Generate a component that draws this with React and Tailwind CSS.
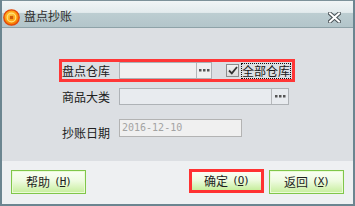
import React from "react";

const cjk = "font-['Noto_Sans_CJK_SC','Noto_Sans',sans-serif]";

function Dots() {
  return (
    <svg width="11" height="3" viewBox="0 0 11 3">
      <rect x="0" y="0" width="2.5" height="2.5" fill="#555" />
      <rect x="4" y="0" width="2.5" height="2.5" fill="#555" />
      <rect x="8" y="0" width="2.5" height="2.5" fill="#555" />
    </svg>
  );
}

function Coin() {
  return (
    <svg width="17" height="17" viewBox="0 0 17 17">
      <defs>
        <radialGradient id="cg" cx="0.45" cy="0.4" r="0.6">
          <stop offset="0" stopColor="#ffd24a" />
          <stop offset="0.6" stopColor="#ffa012" />
          <stop offset="1" stopColor="#f06a00" />
        </radialGradient>
      </defs>
      <circle cx="8.5" cy="8.5" r="7.7" fill="url(#cg)" stroke="#e2480a" strokeWidth="1.3" />
      <circle cx="8.5" cy="8.5" r="4.3" fill="none" stroke="#ffe27a" strokeWidth="1.2" />
      <rect x="6.8" y="6.8" width="3.4" height="3.4" fill="#d05a08" />
    </svg>
  );
}

function CloseX() {
  return (
    <svg width="13" height="11" viewBox="0 0 13 11">
      <path d="M2 1.5 L11 9.5 M11 1.5 L2 9.5" stroke="#4a5358" strokeWidth="4" strokeLinecap="square" />
      <path d="M2 1.5 L11 9.5 M11 1.5 L2 9.5" stroke="#ffffff" strokeWidth="2" strokeLinecap="square" />
    </svg>
  );
}

function GreenButton({ label, keyChar, className = "" }) {
  return (
    <div
      className={`w-[75px] h-[24px] flex items-center justify-center border border-[#80c64a] bg-[linear-gradient(to_bottom,#fafef4_0%,#eefbe0_45%,#c6ee9c_100%)] shadow-[inset_0_0_0_1px_#eafbd6] text-[12px] text-[#1e1e1e] ${cjk} ${className}`}
    >
      <span className="leading-[16px]">{label}</span>
      <span className="ml-[4px] leading-[16px] font-['DejaVu_Sans_Mono',monospace] text-[11px] tracking-[-1px]">
        (<span className="underline underline-offset-[1px]">{keyChar}</span>)
      </span>
    </div>
  );
}

export default function App() {
  return (
    <div className="w-[355px] h-[206px] flex flex-col border-x-2 border-b-2 border-[#6b8590] bg-[#dcdfe3] overflow-hidden">
      {/* Title bar */}
      <div className="h-[28px] shrink-0 flex items-center border-t border-[#7d929a] border-b border-b-[#8ea2a8] bg-[linear-gradient(to_bottom,#f1f5f6_0%,#e3ebed_44%,#bccdd1_47%,#b3c5ca_100%)]">
        <div className="ml-[1px] mt-[7px]">
          <Coin />
        </div>
        <div className={`ml-[4px] mt-[3px] text-[12px] leading-[16px] text-[#2e2e2e] ${cjk}`}>盘点抄账</div>
        <div className="ml-auto mr-[12px] mt-[6px]">
          <CloseX />
        </div>
      </div>

      {/* Content */}
      <div className={`h-[133px] shrink-0 pl-[57px] pt-[31px] ${cjk} text-[12px] text-[#202020]`}>
        {/* Row 1 with red highlight */}
        <div className="w-[236px] h-[23px] border-[3px] border-[#ff3636] flex items-center">
          <div className="w-[57px] leading-[16px] whitespace-nowrap">盘点仓库</div>
          <div className="w-[93px] h-[17px] flex border border-[#adb1b5] bg-[#f0f0f0]">
            <div className="flex-1" />
            <div className="w-[15px] border-l border-[#b4b6b8] flex items-center justify-center">
              <Dots />
            </div>
          </div>
          <div className="ml-[14px] w-[13px] h-[13px] shrink-0 border border-[#8c8c8c] bg-[linear-gradient(to_bottom,#f2f2f2,#dcdcdc)] flex items-center justify-center">
            <svg width="10" height="9" viewBox="0 0 10 9">
              <path d="M1 4.5 L3.8 7.3 L9 1" stroke="#333" strokeWidth="1.8" fill="none" />
            </svg>
          </div>
          <div className="ml-[2px] w-[50px] h-[16px] shrink-0 border border-dotted border-[#111] flex items-center justify-center leading-[14px] text-[12px] whitespace-nowrap">
            全部仓库
          </div>
        </div>

        {/* Row 2 */}
        <div className="ml-[3px] mt-[6px] flex items-center">
          <div className="w-[57px] leading-[16px] whitespace-nowrap">商品大类</div>
          <div className="w-[170px] h-[17px] flex border border-[#aeb2b6] bg-[#e8ebef]">
            <div className="flex-1" />
            <div className="w-[17px] border-l border-[#b6b8bb] flex items-center justify-center">
              <Dots />
            </div>
          </div>
        </div>

        {/* Row 3 */}
        <div className="ml-[3px] mt-[14px] flex items-start">
          <div className="w-[57px] pt-[6px] leading-[16px] whitespace-nowrap">抄账日期</div>
          <div className="w-[123px] h-[18px] border border-[#b3b3b3] bg-[#f0f0f0] flex items-center pl-[2px] pb-[1px]">
            <span className="font-['DejaVu_Sans_Mono',monospace] text-[10px] leading-[12px] text-[#a3a3a3]">2016-12-10</span>
          </div>
        </div>
      </div>

      {/* Bottom buttons */}
      <div className="flex-1 bg-[#eef0f2] flex items-start pt-[9px] px-[9px]">
        <GreenButton label="帮助" keyChar="H" />
        <div className="ml-auto -mt-[1px]">
          <GreenButton label="确定" keyChar="O" className="w-[73px] border-[3px] border-[#ff3232] shadow-none" />
        </div>
        <GreenButton label="返回" keyChar="X" className="ml-[5px]" />
      </div>
    </div>
  );
}
